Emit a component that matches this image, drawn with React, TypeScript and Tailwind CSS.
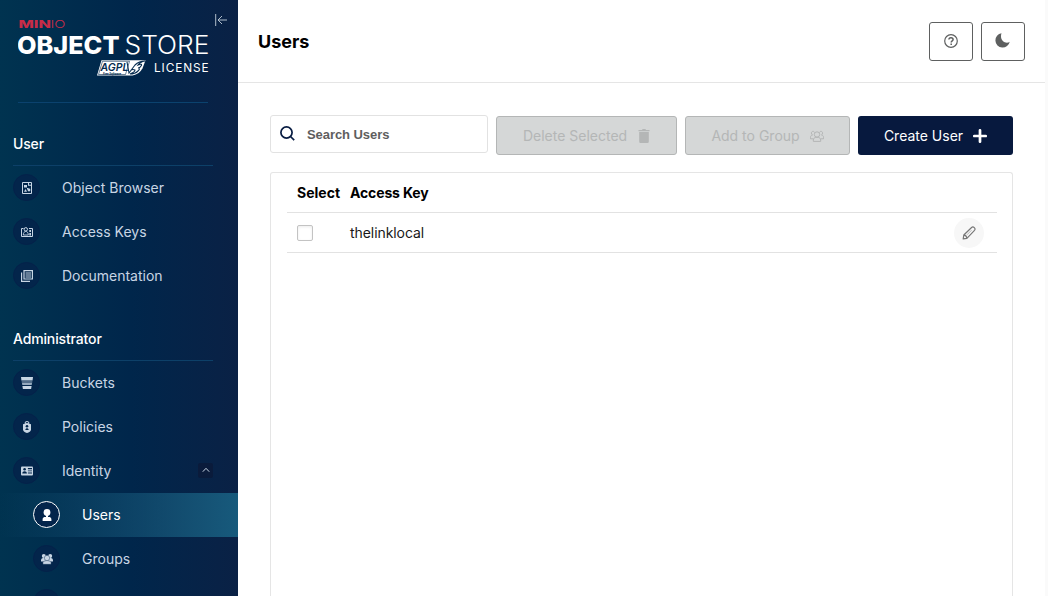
import type { ReactNode } from "react";

function Glyph({ children, size = 12, className = "" }: { children: ReactNode; size?: number; className?: string }) {
  return (
    <svg width={size} height={size} viewBox="0 0 12 12" fill="none" className={className}>
      {children}
    </svg>
  );
}

const BrowserIcon = () => (
  <Glyph>
    <path d="M1.500.5h9v11h-9z" stroke="currentColor" />
    <path d="M3 3h3v2.500H3zM7 .5v3.200h3.500v-1H8V.5zM3 9.700l1.500-2.700L6 9.700zM6 6h1.500v1.500H6z" fill="currentColor" />
    <circle cx="8" cy="8" r="1.400" fill="currentColor" />
  </Glyph>
);

const KeysIcon = () => (
  <Glyph>
    <path d="M2.500 2.500H.5v8h11v-8H8" stroke="currentColor" />
    <circle cx="4.800" cy="3.300" r="1.700" stroke="currentColor" />
    <path d="M2.300 9c0-4.800 5-4.800 5 0z" stroke="currentColor" strokeWidth=".9" />
    <path d="M8.300 4H10v2H8.300zM8.300 7H10v2.500H8.300z" fill="currentColor" />
  </Glyph>
);

const DocsIcon = () => (
  <Glyph>
    <path d="M3 .6h8.400v8.400H3zM.6 2.500v8.900h8.400" stroke="currentColor" strokeWidth="1.200" />
    <path d="M4.500 3h5.500M4.500 5h5.500M4.500 7h5.500" stroke="currentColor" />
  </Glyph>
);

const BucketIcon = () => (
  <Glyph>
    <path d="M0 0h12l-.4 3.500H.4z" fill="currentColor" />
    <path d="M.6 4h10.800l-.2 2H.8z" fill="currentColor" opacity=".4" />
    <path d="M1 6h10l-.3 2H1.300z" fill="currentColor" opacity=".75" />
    <path d="M1.400 9h9.200l-.5 3H1.900z" fill="currentColor" />
  </Glyph>
);

const PolicyIcon = () => (
  <Glyph>
    <path d="M4.300 3V1q1.700-1 3.400 0v2" stroke="currentColor" />
    <path d="M2 3.200 6 2l4 1.200v5C10 10.300 8 11.500 6 12 4 11.500 2 10.300 2 8.200z" fill="currentColor" />
    <circle cx="6" cy="5.300" r="1.300" fill="#03254b" />
    <path d="M4.300 9c.2-2.500 3.200-2.500 3.400 0z" fill="#03254b" />
  </Glyph>
);

const IdentityIcon = () => (
  <Glyph>
    <rect y="1.500" width="12" height="9" rx="1" fill="currentColor" />
    <circle cx="3.600" cy="4.300" r="1.300" fill="#03254b" />
    <path d="M1.300 8.500c0-3 4.600-3 4.600 0zM6.900 3H11v1.200H6.900zM6.900 5.500H11v.8H6.900zM6.900 7.600H11v.8H6.900z" fill="#03254b" />
  </Glyph>
);

const UserIcon = () => (
  <Glyph>
    <circle cx="6" cy="3.400" r="3.400" fill="currentColor" />
    <path d="M5 6h2v2H5zM1.600 12V10.300C1.600 8.600 2.900 8 4.500 8h3c1.600 0 2.900.6 2.900 2.300V12z" fill="currentColor" />
  </Glyph>
);

const GroupIcon = () => (
  <Glyph>
    <circle cx="2.800" cy="2.900" r="2" fill="currentColor" />
    <circle cx="9.200" cy="2.900" r="2" fill="currentColor" />
    <path d="M0 8.500V6.700Q.2 5 2.600 4.700h6.800Q11.800 5 12 6.700v1.800z" fill="currentColor" />
    <path d="M1.900 11.300V9.600Q2.200 7.700 6 7.500q3.800.2 4.100 2.100v1.700z" fill="currentColor" stroke="#03254b" strokeWidth=".4" />
    <circle cx="6" cy="5" r="2.700" fill="currentColor" stroke="#03254b" strokeWidth=".4" />
  </Glyph>
);

const GroupOutlineIcon = () => (
  <svg width="14" height="12" viewBox="0 0 14 12" fill="none" stroke="currentColor" strokeWidth="1">
    <circle cx="7" cy="4.500" r="2.700" />
    <path d="M3.300 11.400V10c0-1.600 1.200-2.500 2.500-2.700h2.400c1.300.2 2.500 1.100 2.500 2.700v1.400z" />
    <path d="M4.500 2.500C3.800.7 1.400 1.200 1.400 3.100c0 .9.500 1.500 1.100 1.800C1.200 5.200.5 6 .5 7.300v1.500h2.700M9.500 2.500c.7-1.800 3.100-1.300 3.100.6 0 .9-.5 1.500-1.100 1.800 1.300.3 2 1.100 2 2.400v1.500h-2.700" />
  </svg>
);

function MenuItem({ icon, label, nested, active, children }: { icon: ReactNode; label?: string; nested?: boolean; active?: boolean; children?: ReactNode }) {
  return (
    <div className={`flex h-11 shrink-0 items-center ${nested ? "pl-[33px]" : "pl-[13px]"} ${active ? "bg-linear-to-r from-transparent to-[#175a7c] text-white" : "text-[#c8d5e4]"}`}>
      <span className={`mb-px flex size-[27px] shrink-0 items-center justify-center rounded-full border bg-[#03254b] pt-px pl-px ${active ? "border-white" : "border-[#04214a]"}`}>{icon}</span>
      {label && <span className="ml-[22px] text-sm leading-5">{label}</span>}
      {children}
    </div>
  );
}

function SectionTitle({ children }: { children: ReactNode }) {
  return <h2 className="mx-[13px] mr-[25px] h-8 shrink-0 border-b border-[#0d4068] text-sm leading-5 font-medium tracking-[-0.01em] text-white">{children}</h2>;
}

function Logo() {
  return (
    <svg className="shrink-0" width="192" height="60" viewBox="0 0 192 60" fontFamily="Inter, sans-serif">
      <g fill="#c72c48">
        <text x=".5" y="9.800" fontSize="10.500" fontWeight="800" textLength="32.500" lengthAdjust="spacingAndGlyphs">MIN</text>
        <text x="32.500" y="9.800" fontSize="10.500" fontWeight="300" textLength="15" lengthAdjust="spacingAndGlyphs">IO</text>
      </g>
      <g fill="#fff">
        <text x="-1" y="35.900" fontSize="25" fontWeight="800" textLength="102.500" lengthAdjust="spacingAndGlyphs">OBJECT</text>
        <text x="106.500" y="35.900" fontSize="25" fontWeight="300" textLength="85" lengthAdjust="spacingAndGlyphs">STORE</text>
        <text x="136" y="53.800" fontSize="11.800" textLength="54.500" lengthAdjust="spacing">LICENSE</text>
      </g>
      <path d="M83.500 42.300h44l-3 8q-3 6-10 7.200H79z" fill="#fff" />
      <path d="M84.500 43.300h27l-4 13.200H80.500z" stroke="#062c50" strokeWidth=".6" fill="none" />
      <text x="82.500" y="52.800" fontSize="11" fontWeight="600" fontStyle="italic" fill="#062c50" textLength="28" lengthAdjust="spacingAndGlyphs">AGPL</text>
      <text x="85" y="56.500" fontSize="3.300" fontWeight="700" fontStyle="italic" fill="#062c50" textLength="18" lengthAdjust="spacingAndGlyphs">Free Software</text>
      <path d="m109 44 2 11 6-8q4-4 10-4-5 1-7 4 5-2 3 1-1 2-3 2 3 0 0 3-3 3-8 3 5-2 5-4-2-1-4 0" stroke="#062c50" fill="none" strokeWidth="1.100" />
    </svg>
  );
}

function Sidebar() {
  return (
    <aside className="flex h-full w-[238px] shrink-0 flex-col overflow-hidden bg-[linear-gradient(90deg,#003350_0%,#00264b_55%,#0a2145_100%)]">
      <div className="mx-[18px] mr-[30px] flex h-[103px] shrink-0 border-b border-[#0b426e] pt-[18px]">
        <Logo />
        <svg className="-mt-1 ml-[5px] shrink-0" width="13" height="12" viewBox="0 0 13 12" fill="none" stroke="#afbdcb">
          <path d="M.7 0v12M12 6H3M7 2 3 6l4 4" />
        </svg>
      </div>
      <nav className="flex flex-col pt-[31px]">
        <SectionTitle>User</SectionTitle>
        <MenuItem icon={<BrowserIcon />} label="Object Browser" />
        <MenuItem icon={<KeysIcon />} label="Access Keys" />
        <MenuItem icon={<DocsIcon />} label="Documentation" />
        <div className="h-[31px] shrink-0" />
        <SectionTitle>Administrator</SectionTitle>
        <MenuItem icon={<BucketIcon />} label="Buckets" />
        <MenuItem icon={<PolicyIcon />} label="Policies" />
        <MenuItem icon={<IdentityIcon />} label="Identity">
          <span className="mr-[25px] mb-[2px] ml-auto flex size-[15px] items-center justify-center rounded-xs bg-[#0a1b3b]">
            <svg width="8" height="6" viewBox="0 0 8 6" fill="none" stroke="currentColor"><path d="m.8 4.700 3.200-3.400 3.200 3.400" /></svg>
          </span>
        </MenuItem>
        <MenuItem icon={<UserIcon />} label="Users" nested active />
        <MenuItem icon={<GroupIcon />} label="Groups" nested />
        <MenuItem icon={<UserIcon />} nested />
      </nav>
    </aside>
  );
}

const disabledButton = "flex h-[39px] shrink-0 items-center justify-center rounded-[3px] border border-[#b4b6b6] bg-[#d5d7d7] text-[#b4b6b6]";
const headerButton = "flex h-[39px] w-11 items-center justify-center rounded-[3px] border border-[#5e6060] text-[#5e6060]";

export default function App() {
  return (
    <div className="flex h-[596px] w-[1048px] overflow-hidden bg-white font-['Inter',sans-serif]">
      <Sidebar />
      <main className="flex min-w-0 grow flex-col">
        <header className="flex h-[83px] shrink-0 items-center justify-between border-b border-[#e5e5e5] pr-5 pl-5">
          <h1 className="pt-0.5 text-lg leading-6 font-bold text-black">Users</h1>
          <div className="flex gap-2">
            <button className={headerButton} aria-label="Help">
              <svg width="14" height="14" viewBox="0 0 14 14" fill="none" stroke="currentColor">
                <circle cx="7" cy="7" r="6.300" strokeWidth="1.200" />
                <path d="M4.900 5.600c0-2.700 4.200-2.400 4.200 0C9.100 7 7.200 6.900 7.200 8.600M7.200 9.400v1.500" strokeWidth="1.500" />
              </svg>
            </button>
            <button className={headerButton} aria-label="Dark mode">
              <svg className="mr-px mb-px" width="15" height="15" viewBox="0 0 15 15" fill="currentColor"><path d="M6.500.3a7.200 7.200 0 1 0 8.200 8.400C11.500 11.500 4 8.300 6.500.3" /></svg>
            </button>
          </div>
        </header>
        <section className="flex min-h-0 grow flex-col pt-8 pr-[32px] pl-8">
          <div className="flex h-10 shrink-0 items-start gap-2">
            <label className="flex h-[38px] w-[218px] shrink-0 items-center rounded-[3px] border border-[#e2e2e2] pl-[9px]">
              <svg className="mb-0.5" width="15" height="15" viewBox="0 0 15 15" fill="none" stroke="#081c42" strokeWidth="1.700"><circle cx="6.500" cy="6.500" r="5.600" /><path d="m10.500 10.500 3.700 3.700" /></svg>
              <input className="mt-0.5 ml-3 w-[160px] font-['Liberation_Sans',sans-serif] text-[13px] font-bold tracking-[-0.005em] outline-none placeholder:text-[#5e5e5e]" placeholder="Search Users" />
            </label>
            <button className={`mt-px w-[181px] ${disabledButton}`}>
              <span className="text-[14px]">Delete Selected</span>
              <svg className="ml-[11px]" width="12" height="14" viewBox="0 0 12 14" fill="currentColor"><path d="M.5 1H4l.6-1h2.800L8 1h3.500v1.200H.5zM1.200 3h9.600v9.500Q10.800 14 9.500 14h-7q-1.300 0-1.300-1.500z" /></svg>
            </button>
            <button className={`mt-px w-[165px] ${disabledButton}`}>
              <span className="mr-[10px] text-[14px]">Add to Group</span>
              <GroupOutlineIcon />
            </button>
            <button className="mt-px flex h-[39px] w-[155px] shrink-0 items-center justify-center rounded-[3px] bg-[#07193e] text-white">
              <span className="text-[14px]">Create User</span>
              <svg className="ml-[10px]" width="14" height="14" viewBox="0 0 14 14" stroke="currentColor" strokeWidth="2.700" strokeLinecap="round"><path d="M7 1.300v11.400M1.300 7h11.400" /></svg>
            </button>
          </div>
          <div className="mt-[17px] mr-[3px] w-[743px] grow rounded-t-[3px] border border-b-0 border-[#e5e5e5] px-[16px] pr-[15px] text-sm">
            <div className="flex h-10 items-center border-b border-[#e2e2e2] pl-[10px] font-bold text-black">
              <span className="w-[53px]">Select</span>
              <span className="tracking-[-0.01em]">Access Key</span>
            </div>
            <div className="flex h-10 items-center border-b border-[#e2e2e2] pl-[10px]">
              <span className="size-4 rounded-xs border border-[#c3c3c3] bg-white shadow-[inset_0_1px_3px_#00000014]" />
              <span className="ml-[37px] tracking-[-0.005em] text-[#181818]">thelinklocal</span>
              <button className="mr-[13px] ml-auto flex size-[30px] items-center justify-center rounded-full bg-[#f7f7f7]" aria-label="Edit">
                <svg width="14" height="14" viewBox="0 0 14 14" fill="none" stroke="#777" strokeWidth="1.200" strokeLinejoin="round">
                  <path d="M1.200 12.900 1.800 9 9.600 1.500c1.700-1.500 4.500 1 2.900 2.900l-7.600 7.900zM1.900 9.200c1.700.2 2.800 1.200 3 3" />
                  <path d="m5 8.800 4.500-4.600" strokeWidth=".5" />
                </svg>
              </button>
            </div>
          </div>
        </section>
      </main>
      <div className="w-[3px] shrink-0 bg-[#fafafa]" />
    </div>
  );
}
